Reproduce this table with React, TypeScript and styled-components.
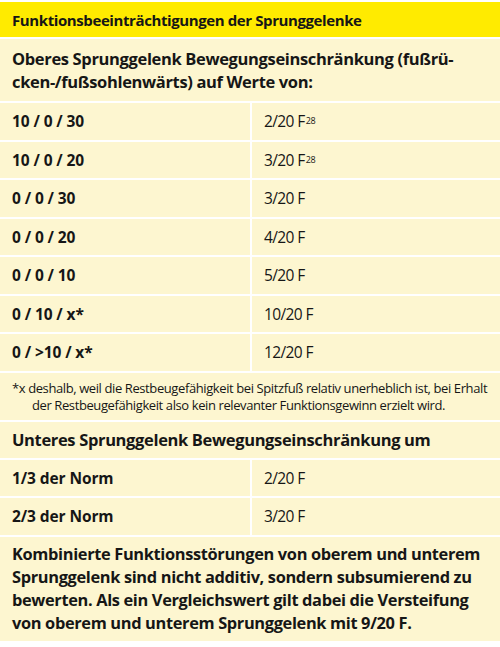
import React from 'react';
import styled, { createGlobalStyle } from 'styled-components';

const GlobalStyle = createGlobalStyle`
  html, body {
    margin: 0;
    padding: 0;
    background: #ffffff;
  }
  body {
    font-family: 'Open Sans', 'Liberation Sans', Arial, sans-serif;
    color: #161616;
  }
`;

const Table = styled.div`
  width: 500px;
  padding-top: 2px;
  display: flex;
  flex-direction: column;
  gap: 2px;
`;

const Title = styled.div`
  background: #ffeb00;
  height: 35px;
  padding: 0 12px;
  display: flex;
  align-items: center;
  font-size: 15px;
  font-weight: 700;
  letter-spacing: -0.4px;
`;

const SectionHead = styled.div<{ $lines?: number }>`
  background: #fdf6d0;
  padding: ${(p) => (p.$lines && p.$lines > 1 ? '8px 12px 8px' : '6px 12px 7px')};
  font-size: 16.5px;
  font-weight: 700;
  line-height: 23px;
  letter-spacing: -0.35px;
`;

const Row = styled.div`
  display: grid;
  grid-template-columns: 250px 1fr;
  gap: 2px;
`;

const Cell = styled.div<{ $bold?: boolean }>`
  background: #fdf6d0;
  height: 36.5px;
  padding: 0 12px;
  display: flex;
  align-items: center;
  font-size: 15.5px;
  font-weight: ${(p) => (p.$bold ? 700 : 400)};
  letter-spacing: ${(p) => (p.$bold ? '-0.1px' : '-0.6px')};
`;

const Sup = styled.sup`
  font-size: 9px;
  line-height: 0;
  vertical-align: 6px;
  margin-left: 1px;
  letter-spacing: -0.4px;
`;

const Note = styled.div`
  background: #fdf6d0;
  padding: 7px 8px 6px 12px;
  font-size: 13px;
  line-height: 17px;
  letter-spacing: -0.4px;
  white-space: nowrap;
`;

const NoteLine = styled.div<{ $indent?: boolean }>`
  padding-left: ${(p) => (p.$indent ? '20px' : '0')};
`;

const Summary = styled.div`
  background: #fdf6d0;
  padding: 5px 12px 6px;
  font-size: 16.4px;
  font-weight: 700;
  line-height: 23.3px;
  letter-spacing: -0.35px;
  white-space: nowrap;
`;

type Entry = { range: string; value: string; note?: string };

const upper: Entry[] = [
  { range: '10 / 0 / 30', value: '2/20 F', note: '28' },
  { range: '10 / 0 / 20', value: '3/20 F', note: '28' },
  { range: '0 / 0 / 30', value: '3/20 F' },
  { range: '0 / 0 / 20', value: '4/20 F' },
  { range: '0 / 0 / 10', value: '5/20 F' },
  { range: '0 / 10 / x*', value: '10/20 F' },
  { range: '0 / >10 / x*', value: '12/20 F' },
];

const lower: Entry[] = [
  { range: '1/3 der Norm', value: '2/20 F' },
  { range: '2/3 der Norm', value: '3/20 F' },
];

const Rows = ({ items }: { items: Entry[] }) => (
  <>
    {items.map((e) => (
      <Row key={e.range}>
        <Cell $bold>{e.range}</Cell>
        <Cell>
          {e.value}
          {e.note && <Sup>{e.note}</Sup>}
        </Cell>
      </Row>
    ))}
  </>
);

export default function App() {
  return (
    <>
      <GlobalStyle />
      <Table>
        <Title>Funktionsbeeinträchtigungen der Sprunggelenke</Title>
        <SectionHead $lines={2}>
          Oberes Sprunggelenk Bewegungseinschränkung (fußrü-
          <br />
          cken-/fußsohlenwärts) auf Werte von:
        </SectionHead>
        <Rows items={upper} />
        <Note>
          <NoteLine>
            *x deshalb, weil die Restbeugefähigkeit bei Spitzfuß relativ unerheblich ist, bei Erhalt
          </NoteLine>
          <NoteLine $indent>
            der Restbeugefähigkeit also kein relevanter Funktionsgewinn erzielt wird.
          </NoteLine>
        </Note>
        <SectionHead>Unteres Sprunggelenk Bewegungseinschränkung um</SectionHead>
        <Rows items={lower} />
        <Summary>
          Kombinierte Funktionsstörungen von oberem und unterem
          <br />
          Sprunggelenk sind nicht additiv, sondern subsumierend zu
          <br />
          bewerten. Als ein Vergleichswert gilt dabei die Versteifung
          <br />
          von oberem und unterem Sprunggelenk mit 9/20 F.
        </Summary>
      </Table>
    </>
  );
}
